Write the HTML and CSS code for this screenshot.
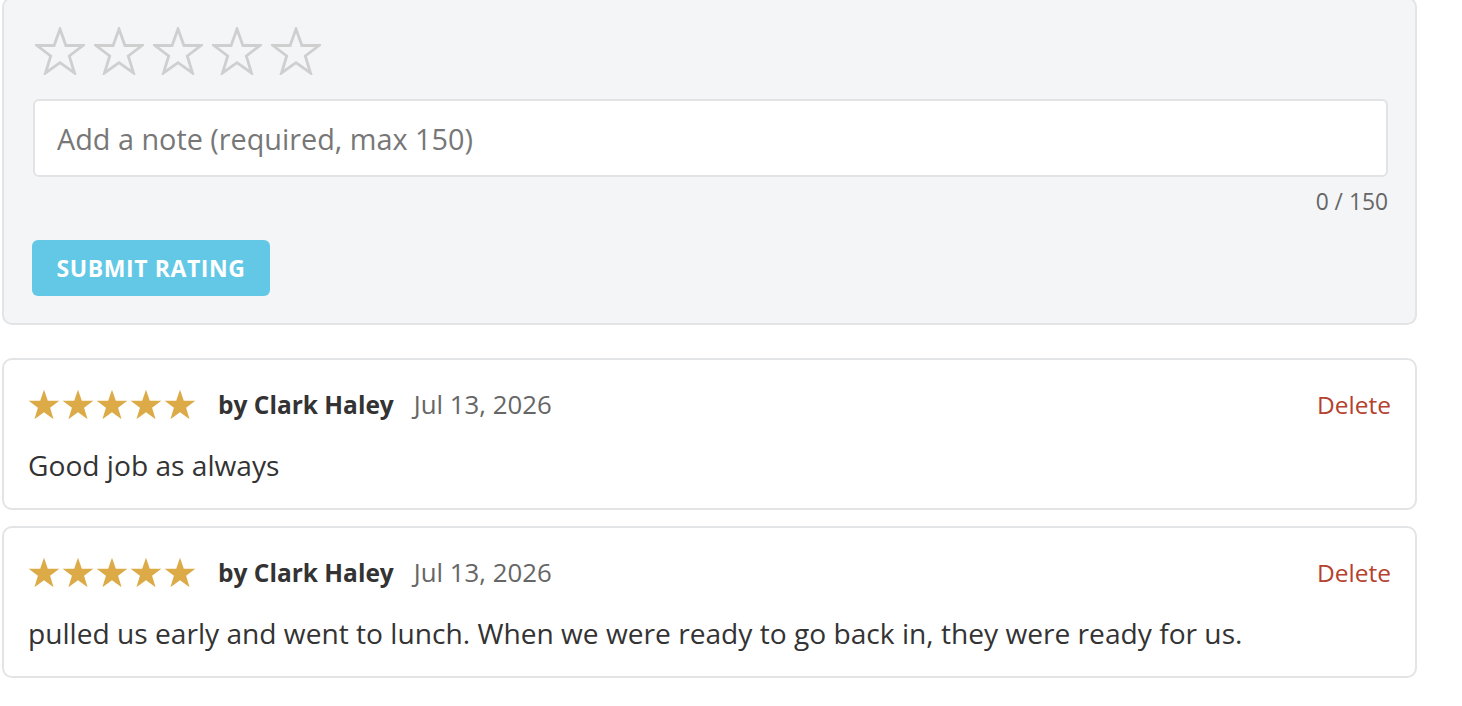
FILE: index.html
```html
<!DOCTYPE html>
<html>
<head>
<meta charset="utf-8">
<link rel="stylesheet" href="styles.css">
</head>
<body>
<div class="page">
  <section class="rate-panel">
    <div class="star-picker">
      <svg class="star-outline" viewBox="0 0 50 48"><polygon points="25,2 30.9,18.5 48,18.5 34.3,29 39.5,46 25,35.7 10.5,46 15.7,29 2,18.5 19.1,18.5"/></svg>
      <svg class="star-outline" viewBox="0 0 50 48"><polygon points="25,2 30.9,18.5 48,18.5 34.3,29 39.5,46 25,35.7 10.5,46 15.7,29 2,18.5 19.1,18.5"/></svg>
      <svg class="star-outline" viewBox="0 0 50 48"><polygon points="25,2 30.9,18.5 48,18.5 34.3,29 39.5,46 25,35.7 10.5,46 15.7,29 2,18.5 19.1,18.5"/></svg>
      <svg class="star-outline" viewBox="0 0 50 48"><polygon points="25,2 30.9,18.5 48,18.5 34.3,29 39.5,46 25,35.7 10.5,46 15.7,29 2,18.5 19.1,18.5"/></svg>
      <svg class="star-outline" viewBox="0 0 50 48"><polygon points="25,2 30.9,18.5 48,18.5 34.3,29 39.5,46 25,35.7 10.5,46 15.7,29 2,18.5 19.1,18.5"/></svg>
    </div>
    <input class="note-input" type="text" placeholder="Add a note (required, max 150)">
    <div class="counter">0 / 150</div>
    <button class="submit-btn">SUBMIT RATING</button>
  </section>

  <article class="review">
    <div class="review-head">
      <div class="stars">
        <svg class="star-fill" viewBox="0 0 50 48"><polygon points="25,1 31,18 49,18 34.5,29 40,47 25,36 10,47 15.5,29 1,18 19,18"/></svg>
        <svg class="star-fill" viewBox="0 0 50 48"><polygon points="25,1 31,18 49,18 34.5,29 40,47 25,36 10,47 15.5,29 1,18 19,18"/></svg>
        <svg class="star-fill" viewBox="0 0 50 48"><polygon points="25,1 31,18 49,18 34.5,29 40,47 25,36 10,47 15.5,29 1,18 19,18"/></svg>
        <svg class="star-fill" viewBox="0 0 50 48"><polygon points="25,1 31,18 49,18 34.5,29 40,47 25,36 10,47 15.5,29 1,18 19,18"/></svg>
        <svg class="star-fill" viewBox="0 0 50 48"><polygon points="25,1 31,18 49,18 34.5,29 40,47 25,36 10,47 15.5,29 1,18 19,18"/></svg>
      </div>
      <span class="author">by Clark Haley</span>
      <span class="date">Jul 13, 2026</span>
      <a class="delete">Delete</a>
    </div>
    <p class="review-text">Good job as always</p>
  </article>

  <article class="review">
    <div class="review-head">
      <div class="stars">
        <svg class="star-fill" viewBox="0 0 50 48"><polygon points="25,1 31,18 49,18 34.5,29 40,47 25,36 10,47 15.5,29 1,18 19,18"/></svg>
        <svg class="star-fill" viewBox="0 0 50 48"><polygon points="25,1 31,18 49,18 34.5,29 40,47 25,36 10,47 15.5,29 1,18 19,18"/></svg>
        <svg class="star-fill" viewBox="0 0 50 48"><polygon points="25,1 31,18 49,18 34.5,29 40,47 25,36 10,47 15.5,29 1,18 19,18"/></svg>
        <svg class="star-fill" viewBox="0 0 50 48"><polygon points="25,1 31,18 49,18 34.5,29 40,47 25,36 10,47 15.5,29 1,18 19,18"/></svg>
        <svg class="star-fill" viewBox="0 0 50 48"><polygon points="25,1 31,18 49,18 34.5,29 40,47 25,36 10,47 15.5,29 1,18 19,18"/></svg>
      </div>
      <span class="author">by Clark Haley</span>
      <span class="date">Jul 13, 2026</span>
      <a class="delete">Delete</a>
    </div>
    <p class="review-text">pulled us early and went to lunch. When we were ready to go back in, they were ready for us.</p>
  </article>
</div>
</body>
</html>
```

FILE: styles.css
```css
* { box-sizing: border-box; }
html, body { margin: 0; padding: 0; background: #fff; }
body {
  font-family: "Open Sans", "Noto Sans", sans-serif;
  color: #333;
}
.page {
  width: 1415px;
  margin-left: 2px;
  margin-top: -3px;
}
.rate-panel {
  background: #f4f5f7;
  border: 2px solid #e3e4e6;
  border-radius: 10px;
  padding: 27px 28px 27px 28px;
  display: flex;
  flex-direction: column;
}
.star-picker {
  display: flex;
  gap: 9px;
  padding-left: 3px;
  height: 50px;
  align-items: center;
}
.star-outline {
  width: 50px;
  height: 48px;
}
.star-outline polygon {
  fill: none;
  stroke: #cfcfcf;
  stroke-width: 2.8;
  stroke-linejoin: miter;
}
.note-input {
  margin-top: 23px;
  margin-left: 1px;
  width: 1355px;
  height: 78px;
  border: 2px solid #e2e3e5;
  border-radius: 6px;
  background: #fff;
  padding: 0 22px;
  font-family: "Open Sans", sans-serif;
  font-size: 28.8px;
  color: #333;
  outline: none;
}
.note-input::placeholder { color: #777; }
.counter {
  width: 1356px;
  text-align: right;
  font-size: 22.8px;
  color: #666;
  margin-top: 10px;
  line-height: 30px;
}
.submit-btn {
  margin-top: 23px;
  align-self: flex-start;
  width: 238px;
  height: 56px;
  border: none;
  border-radius: 6px;
  background: #62c8e5;
  color: #fff;
  font-family: "Open Sans", sans-serif;
  font-weight: 700;
  font-size: 23px;
  letter-spacing: 0.6px;
  padding: 0;
}
.review {
  margin-top: 33px;
  border: 2px solid #e3e4e6;
  border-radius: 10px;
  background: #fff;
  height: 152px;
  padding: 26px 24px 0 24px;
}
.review + .review { margin-top: 16px; }
.review-head {
  display: flex;
  align-items: center;
  height: 36px;
}
.stars {
  display: flex;
  gap: 2px;
  margin-right: 22px;
}
.star-fill {
  width: 32px;
  height: 31px;
}
.star-fill polygon { fill: #dcab48; }
.author {
  font-weight: 700;
  font-size: 24.5px;
  color: #333;
}
.date {
  margin-left: 20px;
  font-size: 25.8px;
  color: #666;
}
.delete {
  margin-left: auto;
  font-size: 24.5px;
  color: #b5412f;
  cursor: pointer;
}
.review-text {
  margin: 25px 0 0 0;
  font-size: 28.15px;
  line-height: 36px;
  color: #333;
}
```
